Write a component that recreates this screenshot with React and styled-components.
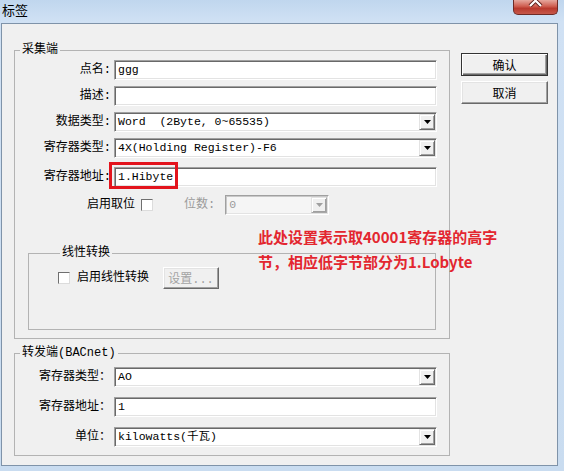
import React from "react";
import styled, { createGlobalStyle, css } from "styled-components";

const UI_FONT = `"Liberation Mono", "Noto Sans CJK SC", monospace`;
const CJK_FONT = `"Noto Sans CJK SC", sans-serif`;

const GlobalStyle = createGlobalStyle`
  html, body {
    margin: 0;
    padding: 0;
  }
  body {
    background: #c9dcf0;
    font-family: ${UI_FONT};
    font-size: 12px;
    color: #000;
  }
`;

const Window = styled.div`
  width: 564px;
  height: 471px;
  display: flex;
  flex-direction: column;
  background: linear-gradient(#c0d6ee, #d0e1f4 22px, #c9dcf0);
  overflow: hidden;
`;

const TitleBar = styled.div`
  height: 23px;
  display: flex;
  justify-content: space-between;
  align-items: flex-start;
`;

const Caption = styled.span`
  font-family: ${CJK_FONT};
  font-size: 13px;
  line-height: 20px;
  padding-left: 2px;
  color: #000;
`;

const CloseBox = styled.div`
  width: 45px;
  height: 15px;
  margin-right: 6px;
  box-sizing: border-box;
  border: 1px solid #6e2b26;
  border-top: none;
  border-radius: 0 0 5px 5px;
  background: linear-gradient(#e6a79d, #cf5e50 45%, #b93a2e 60%, #c6584a);
  display: flex;
  justify-content: center;
  align-items: flex-start;
`;

const Client = styled.div`
  position: relative;
  width: 557px;
  margin-left: 1px;
  box-sizing: border-box;
  border: 1px solid #7f93a9;
  background: #f0f0f0;
  display: flex;
  align-items: flex-start;
  padding: 18px 0 9px 12px;
`;

const Main = styled.div`
  display: flex;
  flex-direction: column;
`;

const Group = styled.fieldset`
  margin: ${(p) => p.$mt || 0}px 0 0 0;
  padding: 0 12px 8px 0;
  border: 1px solid #b3b3b3;
  width: 436px;
  box-sizing: border-box;
  min-width: 0;

  ${(p) =>
    p.$inner &&
    css`
      width: 408px;
      height: 85px;
      margin: 30px 0 0 13px;
      padding: 6px 0 0 29px;
    `}
`;

const Legend = styled.legend`
  margin-left: ${(p) => (p.$inner ? 2 : 5)}px;
  padding: 0 2px;
  font-family: ${UI_FONT};
  font-size: 12px;
  line-height: 16px;
`;

const Row = styled.div`
  display: grid;
  grid-template-columns: 96px 323px;
  column-gap: 3px;
  align-items: center;
  margin-top: ${(p) => p.$mt}px;
`;

const Label = styled.span`
  text-align: right;
  font-size: 12px;
  line-height: 20px;
  white-space: nowrap;
  color: ${(p) => (p.$disabled ? "#9b9b9b" : "#000")};
  margin-left: ${(p) => p.$ml || 0}px;
`;

const Field = styled.div`
  position: relative;
  height: 20px;
  width: ${(p) => (p.$w ? `${p.$w}px` : "auto")};
  margin-left: ${(p) => p.$ml || 0}px;
  box-sizing: border-box;
  background: ${(p) => (p.$disabled ? "#f5f5f5" : "#fff")};
  border-top: 1px solid #a0a0a0;
  border-left: 1px solid #a0a0a0;
  border-bottom: 1px solid #fff;
  border-right: 1px solid #fff;
  box-shadow: inset 1px 1px 0 ${(p) => (p.$disabled ? "#c8c8c8" : "#696969")},
    inset -1px -1px 0 #e3e3e3;
  display: flex;
  align-items: center;
`;

const Value = styled.span`
  flex: 1;
  padding-left: 3px;
  font-family: ${UI_FONT};
  font-size: 11.5px;
  line-height: 16px;
  white-space: pre;
  color: ${(p) => (p.$disabled ? "#9b9b9b" : "#000")};
`;

const DropButton = styled.span`
  width: 16px;
  align-self: stretch;
  margin: 1px 1px 1px 0;
  box-sizing: border-box;
  background: #f0f0f0;
  border-top: 1px solid #e3e3e3;
  border-left: 1px solid #e3e3e3;
  border-right: 1px solid ${(p) => (p.$disabled ? "#a8a8a8" : "#696969")};
  border-bottom: 1px solid ${(p) => (p.$disabled ? "#a8a8a8" : "#696969")};
  box-shadow: inset 1px 1px 0 #fff, inset -1px -1px 0 #a0a0a0;
  display: flex;
  align-items: center;
  justify-content: center;
`;

const Highlight = styled.span`
  position: absolute;
  left: -6px;
  top: -6px;
  width: 69px;
  height: 27px;
  box-sizing: border-box;
  border: 3px solid #e3141d;
  pointer-events: none;
`;

const Check = styled.span`
  display: inline-block;
  width: 12px;
  height: 12px;
  margin-left: ${(p) => p.$ml || 0}px;
  box-sizing: border-box;
  background: #fff;
  border-top: 1px solid #6f6f6f;
  border-left: 1px solid #6f6f6f;
  border-right: 1px solid #dcdcdc;
  border-bottom: 1px solid #dcdcdc;
`;

const OptionRow = styled.div`
  display: flex;
  align-items: center;
  margin-top: 8px;
  padding-left: 72px;
`;

const LinearRow = styled.div`
  display: flex;
  align-items: center;
`;

const PushButton = styled.button`
  width: ${(p) => p.$w}px;
  height: ${(p) => p.$h}px;
  margin-left: ${(p) => p.$ml || 0}px;
  box-sizing: border-box;
  padding: 0;
  font-family: ${UI_FONT};
  font-size: 12px;
  color: #000;
  background: #f0f0f0;
  border: 1px solid;
  border-color: #fff #696969 #696969 #fff;
  box-shadow: inset -1px -1px 0 #a0a0a0, inset 1px 1px 0 #e3e3e3;

  &:disabled {
    color: #a3a3a3;
  }

  ${(p) =>
    p.$default &&
    css`
      border-color: #333;
      box-shadow: inset 1px 1px 0 #fff, inset -1px -1px 0 #696969,
        inset -2px -2px 0 #a0a0a0;
    `}
`;

const Side = styled.div`
  display: flex;
  flex-direction: column;
  gap: 5px;
  margin-left: 11px;
  padding-top: 11px;
`;

const Note = styled.div`
  position: absolute;
  left: 256px;
  top: 200px;
  font-family: ${CJK_FONT};
  font-size: 15px;
  font-weight: 700;
  line-height: 25px;
  color: #e3262f;
  white-space: nowrap;
`;

const Arrow = ({ disabled }) => (
  <svg width="7" height="4" viewBox="0 0 7 4">
    <path d="M0 0h7L3.5 4z" fill={disabled ? "#a0a0a0" : "#000"} />
  </svg>
);

const Combo = ({ value, w, ml, disabled }) => (
  <Field $w={w} $ml={ml} $disabled={disabled}>
    <Value $disabled={disabled}>{value}</Value>
    <DropButton $disabled={disabled}>
      <Arrow disabled={disabled} />
    </DropButton>
  </Field>
);

const App = () => (
  <>
    <GlobalStyle />
    <Window>
      <TitleBar>
        <Caption>标签</Caption>
        <CloseBox>
          <svg width="16" height="7" viewBox="0 0 16 7">
            <path d="M2 -5L13 6M13 -5L2 6" stroke="#5a1d18" strokeWidth="4" />
            <path d="M2 -5L13 6M13 -5L2 6" stroke="#fff" strokeWidth="2.2" />
          </svg>
        </CloseBox>
      </TitleBar>

      <Client>
        <Main>
          <Group>
            <Legend>采集端</Legend>
            <Row $mt={2}>
              <Label>点名:</Label>
              <Field>
                <Value>ggg</Value>
              </Field>
            </Row>
            <Row $mt={6}>
              <Label>描述:</Label>
              <Field>
                <Value />
              </Field>
            </Row>
            <Row $mt={6}>
              <Label>数据类型:</Label>
              <Combo value="Word  (2Byte, 0~65535)" />
            </Row>
            <Row $mt={6}>
              <Label>寄存器类型:</Label>
              <Combo value="4X(Holding Register)-F6" />
            </Row>
            <Row $mt={9}>
              <Label>寄存器地址:</Label>
              <Field>
                <Value>1.Hibyte</Value>
                <Highlight />
              </Field>
            </Row>
            <OptionRow>
              <Label>启用取位</Label>
              <Check $ml={6} />
              <Label $disabled $ml={31}>
                位数:
              </Label>
              <Combo value="0" w={104} ml={10} disabled />
            </OptionRow>

            <Group $inner>
              <Legend $inner>线性转换</Legend>
              <LinearRow>
                <Check />
                <Label $ml={7}>启用线性转换</Label>
                <PushButton $w={56} $h={22} $ml={14} disabled>
                  设置...
                </PushButton>
              </LinearRow>
            </Group>
          </Group>

          <Group $mt={6}>
            <Legend>转发端(BACnet)</Legend>
            <Row $mt={6}>
              <Label>寄存器类型：</Label>
              <Combo value="AO" />
            </Row>
            <Row $mt={10}>
              <Label>寄存器地址：</Label>
              <Field>
                <Value>1</Value>
              </Field>
            </Row>
            <Row $mt={10}>
              <Label>单位：</Label>
              <Combo value="kilowatts(千瓦)" />
            </Row>
          </Group>
        </Main>

        <Side>
          <PushButton $w={87} $h={23} $default>
            确认
          </PushButton>
          <PushButton $w={87} $h={23}>
            取消
          </PushButton>
        </Side>

        <Note>
          此处设置表示取40001寄存器的高字
          <br />
          节，相应低字节部分为1.Lobyte
        </Note>
      </Client>
    </Window>
  </>
);

export default App;
